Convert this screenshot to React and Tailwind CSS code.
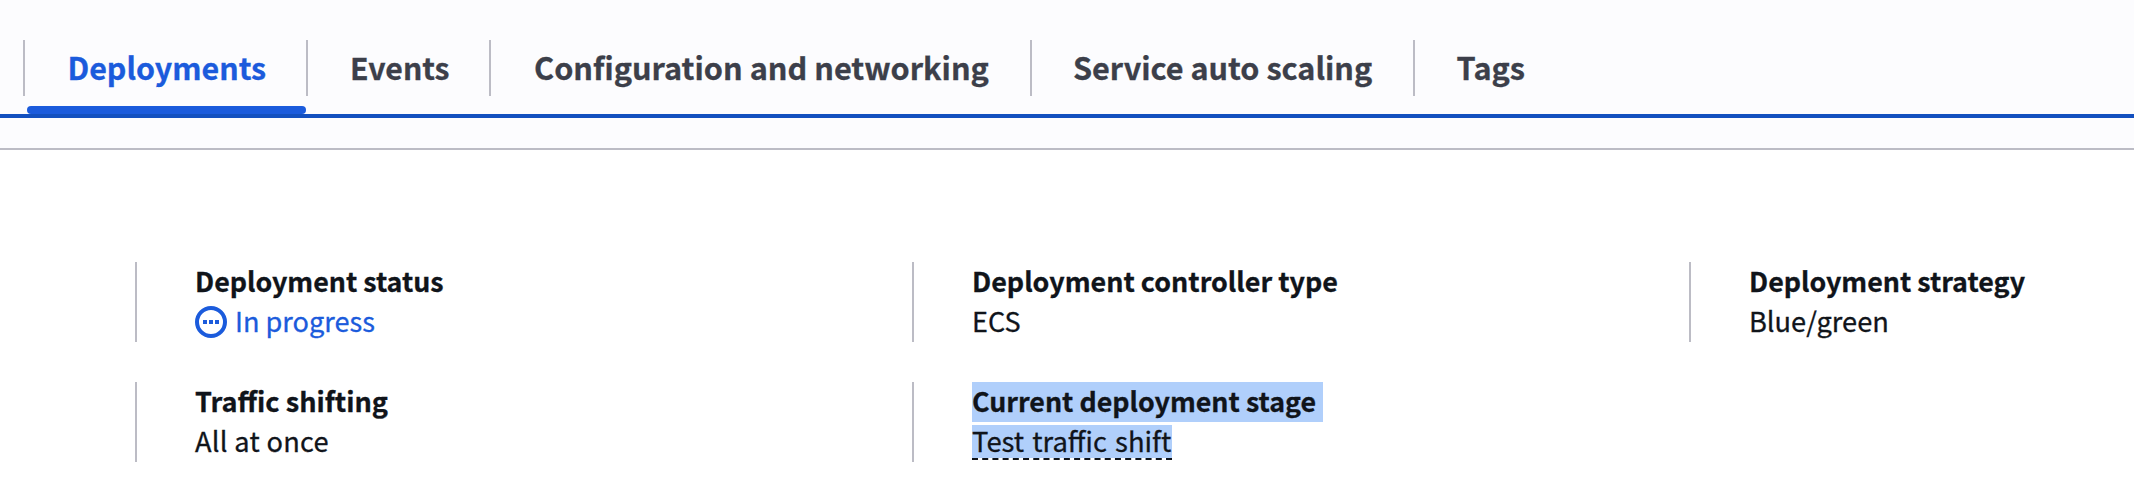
const TABS = [
  { label: "Deployments", active: true, cls: "w-[283px]", text: "text-[30.4px] pl-[42.5px]" },
  { label: "Events", cls: "w-[183px]", text: "text-[30.2px] pl-[42px]" },
  { label: "Configuration and networking", cls: "w-[541px]", text: "text-[30.7px] pl-[43px]" },
  { label: "Service auto scaling", cls: "w-[383px]", text: "text-[30.6px] pl-[41px]" },
  { label: "Tags", cls: "w-[150px]", text: "text-[30.7px] pl-[41.5px]" },
];

function ProgressIcon() {
  return (
    <svg className="size-8 shrink-0" viewBox="0 0 32 32" fill="none">
      <circle cx="16" cy="16" r="14" stroke="#1b5bdc" strokeWidth="4" />
      <path d="M8 14h4v4H8zM14 14h4v4h-4zM20 14h4v4h-4z" fill="#1b5bdc" />
    </svg>
  );
}

function Tab({ label, active, cls, text }) {
  return (
    <div className={`relative h-[78px] shrink-0 ${cls}`}>
      <div className="h-14 border-l-2 border-[#bcbcc5]">
        <span
          className={`block h-14 whitespace-nowrap font-bold leading-[54px] [-webkit-text-stroke:0.3px_currentColor] ${text} ${
            active ? "text-[#1b5bdc]" : "text-[#3c3f4a]"
          }`}
        >
          {label}
        </span>
      </div>
      {active && (
        <div className="absolute bottom-1 left-1 h-2 w-[279px] rounded bg-[#1b5bdc]" />
      )}
    </div>
  );
}

function Field({ label, labelClass, children }) {
  return (
    <div className="h-20 w-[777px] shrink-0 border-l-2 border-[#bcbcc5] pl-[58px]">
      <div className="flex h-10">
        <span
          className={`h-10 whitespace-nowrap font-bold leading-[38px] [-webkit-text-stroke:0.3px_currentColor] ${labelClass}`}
        >
          {label}
        </span>
      </div>
      <div className="flex h-10 whitespace-nowrap text-[27px] leading-[38px] [-webkit-text-stroke:0.3px_currentColor]">
        {children}
      </div>
    </div>
  );
}

export default function App() {
  return (
    <div className="flex h-[482px] w-[2134px] flex-col overflow-hidden bg-white font-['Noto_Sans_CJK_SC','Noto_Sans',sans-serif] text-[#10141a]">
      <div className="flex h-[150px] shrink-0 flex-col border-b-2 border-[#bcbcc5] bg-[#fcfcfe]">
        <div className="flex h-[118px] border-b-4 border-[#1350bf] pl-[23px] pt-10">
          {TABS.map((t) => (
            <Tab key={t.label} {...t} />
          ))}
        </div>
      </div>
      <div className="flex flex-col gap-10 pl-[135px] pt-[112px]">
        <div className="flex">
          <Field label="Deployment status" labelClass="text-[26.8px]">
            <div className="flex gap-2 text-[#1b5bdc]">
              <span className="flex h-10 items-center">
                <ProgressIcon />
              </span>
              <span className="text-[27.1px]">In progress</span>
            </div>
          </Field>
          <Field label="Deployment controller type" labelClass="text-[26.9px]">
            ECS
          </Field>
          <Field label="Deployment strategy" labelClass="text-[26.8px]">
            <span className="text-[27.2px] leading-9">Blue/green</span>
          </Field>
        </div>
        <div className="flex">
          <Field label="Traffic shifting" labelClass="text-[27.1px]">
            <span className="text-[27.2px] leading-9 tracking-[0.3px]">All at once</span>
          </Field>
          <Field label="Current deployment stage" labelClass="w-[351px] bg-[#b0cffb] text-[26.8px]">
            <span className="mt-[3px] h-[35px] w-[200px] border-b-2 border-dashed border-[#10141a] bg-[#b0cffb] bg-clip-padding text-[27.4px] leading-[30px] [word-spacing:2px]">
              Test traffic shift
            </span>
          </Field>
        </div>
      </div>
    </div>
  );
}
